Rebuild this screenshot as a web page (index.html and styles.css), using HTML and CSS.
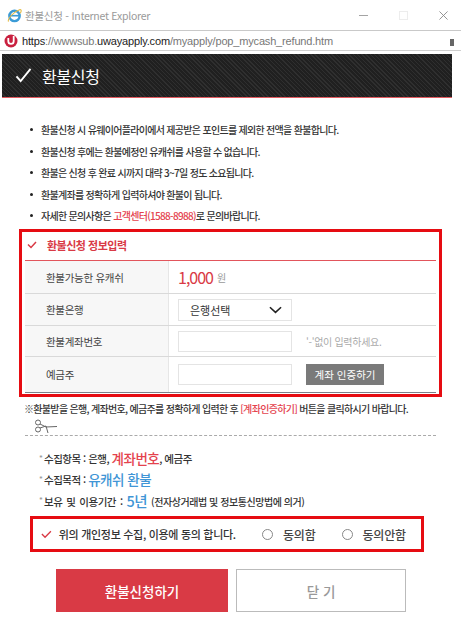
FILE: index.html
```html
<!DOCTYPE html>
<html lang="ko">
<head>
<meta charset="utf-8">
<title>환불신청</title>
<link rel="stylesheet" href="styles.css">
</head>
<body>
<div class="page">
  <div class="titlebar">
    <svg class="ie" viewBox="0 0 16 16" width="15" height="15"><circle cx="8" cy="8.500" r="5.500" fill="none" stroke="#3b9bd6" stroke-width="2.600"/><path d="M3 8.200h10.500" stroke="#3b9bd6" stroke-width="1.800"/><path d="M1.500 14.500C.5 12 6 4 14 1.500c1.500 0 1.500 2 .3 4" fill="none" stroke="#e3b93c" stroke-width="1.100"/></svg>
    <span class="wintitle">환불신청 - Internet Explorer</span>
    <div class="winctl">
      <svg viewBox="0 0 10 10" width="9" height="9"><path d="M0 5h10" stroke="#9a9a9a"/></svg>
      <svg viewBox="0 0 10 10" width="9" height="9"><rect x=".5" y=".5" width="9" height="9" fill="none" stroke="#ececec"/></svg>
      <svg viewBox="0 0 10 10" width="9" height="9"><path d="M.5.500l9 9M9.500.500l-9 9" stroke="#8a8a8a"/></svg>
    </div>
  </div>
  <div class="addrbar">
    <svg viewBox="0 0 14 14" width="14" height="14"><circle cx="7" cy="7" r="6.500" fill="#c9203f"/><path d="M4.300 4v3.200a2.700 2.700 0 0 0 5.400 0V2" fill="none" stroke="#fff" stroke-width="1.800"/></svg>
    <span class="url"><b>https</b>://wwwsub.<b>uwayapply.com</b>/myapply/pop_mycash_refund.htm</span>
    <svg class="lock" viewBox="0 0 4 10" width="4" height="10"><rect y="3" width="4" height="7" fill="#666"/></svg>
  </div>
  <header class="banner">
    <svg viewBox="0 0 18 16" width="17" height="15"><path d="M1.500 9l4.500 5L16.500 1" fill="none" stroke="#fff" stroke-width="2"/></svg>
    <h1>환불신청</h1>
  </header>

  <ul class="notes">
    <li>환불신청 시 유웨이어플라이에서 제공받은 포인트를 제외한 전액을 환불합니다.</li>
    <li>환불신청 후에는 환불예정인 유캐쉬를 사용할 수 없습니다.</li>
    <li>환불은 신청 후 완료 시까지 대략 3~7일 정도 소요됩니다.</li>
    <li>환불계좌를 정확하게 입력하셔야 환불이 됩니다.</li>
    <li>자세한 문의사항은 <em>고객센터(1588-8988)</em>로 문의바랍니다.</li>
  </ul>

  <section class="formbox">
    <h2><svg viewBox="0 0 10 8" width="10" height="8"><path d="M1 3.500l3 3L9 1" fill="none" stroke="#d93a45" stroke-width="1.500"/></svg>환불신청 정보입력</h2>
    <div class="row r1">
      <div class="th">환불가능한 유캐쉬</div>
      <div class="td"><span class="amount">1,000</span><span class="won">원</span></div>
    </div>
    <div class="row r2">
      <div class="th">환불은행</div>
      <div class="td"><div class="select"><span>은행선택</span><svg viewBox="0 0 14 8" width="13" height="8"><path d="M1 1l6 5.500L13 1" fill="none" stroke="#222" stroke-width="1.700"/></svg></div></div>
    </div>
    <div class="row r3">
      <div class="th">환불계좌번호</div>
      <div class="td"><div class="input"></div><span class="hint">'-'없이 입력하세요.</span></div>
    </div>
    <div class="row r4">
      <div class="th">예금주</div>
      <div class="td"><div class="input"></div><span class="verify">계좌 인증하기</span></div>
    </div>
  </section>

  <p class="warn">※환불받을 은행, 계좌번호, 예금주를 정확하게 입력한 후 <em>[계좌인증하기]</em> 버튼을 클릭하시기 바랍니다.</p>

  <div class="cut">
    <svg viewBox="0 0 24 15" width="24" height="15"><circle cx="4" cy="3.500" r="2.500" fill="none" stroke="#666"/><circle cx="4" cy="10.500" r="2.500" fill="none" stroke="#666"/><path d="M6 5l6 3 11-.500M6 9l6-2 2 7" fill="none" stroke="#666"/></svg>
  </div>

  <ul class="collect">
    <li>수집항목 : 은행, <strong class="red">계좌번호</strong>, 예금주</li>
    <li>수집목적 : <strong class="blue">유캐쉬 환불</strong></li>
    <li class="retain">보유 및 이용기간 : <strong class="blue">5년</strong> <small>(전자상거래법 및 정보통신망법에 의거)</small></li>
  </ul>

  <div class="agree">
    <svg viewBox="0 0 12 9" width="11" height="9"><path d="M1 4l3.500 3.500L11 1" fill="none" stroke="#d93a45" stroke-width="1.500"/></svg>
    <span class="agreetext">위의 개인정보 수집, 이용에 동의 합니다.</span>
    <span class="radio"><i></i>동의함</span>
    <span class="radio"><i></i>동의안함</span>
  </div>

  <div class="actions">
    <button class="btn primary">환불신청하기</button>
    <button class="btn ghost">닫 기</button>
  </div>
</div>
</body>
</html>
```

FILE: styles.css
```css
* { box-sizing: border-box; }
html, body { margin: 0; padding: 0; background: #fff; }
body { font-family: "Noto Sans CJK KR", "Noto Sans", sans-serif; color: #333; }
ul, h1, h2, p { margin: 0; padding: 0; }
li { list-style: none; }
em { font-style: normal; color: #e4424d; }
.page { width: 461px; height: 630px; overflow: hidden; }

.titlebar { height: 31px; display: flex; align-items: center; padding: 0 13px 0 7px; border-bottom: 1px solid #c9c9c9; }
.wintitle { margin-left: 3px; font-size: 10.500px; color: #9a9a9a; letter-spacing: -.25px; }
.winctl { margin-left: auto; display: flex; gap: 31px; }

.addrbar { height: 20px; display: flex; align-items: center; padding: 0 2px 0 4px; border-bottom: 1px solid #cfcfcf; gap: 4px; }
.url { font-family: "Liberation Sans", sans-serif; font-size: 11px; color: #777; white-space: nowrap; letter-spacing: -.17px; }
.url b { font-weight: normal; color: #222; }
.lock { margin-left: auto; margin-right: 5px; }

.banner { margin: 3px 9px 0 2px; height: 44px; display: flex; align-items: center; padding-left: 13px; gap: 10px; border-bottom: 1px solid #e25a5f; background: repeating-linear-gradient(45deg, #202020 0 2px, #2f2f2f 2px 3px); }
.banner h1 { font-size: 16px; font-weight: 400; color: #fff; letter-spacing: -.3px; }

.notes { margin-top: 21px; padding-left: 29px; }
.notes li { position: relative; height: 21.500px; line-height: 21.500px; padding-left: 12px; font-size: 10px; font-weight: 500; letter-spacing: -.7px; color: #333; white-space: nowrap; }
.notes li::before { content: ""; position: absolute; left: 1px; top: 9px; width: 3px; height: 3px; border-radius: 50%; background: #222; }

.formbox { margin: 2.500px 0 0 19px; width: 423px; height: 168px; border: 3px solid #e60c12; padding: 0 3px; }
.formbox h2 { height: 29px; display: flex; align-items: center; gap: 10px; padding: 0 0 2px 2px; font-size: 11px; font-weight: 700; color: #d93a45; border-bottom: 1px solid #e2555c; letter-spacing: -.5px; }
.row { display: flex; border-bottom: 1px solid #d9d9d9; font-size: 10.500px; }
.r1 { height: 33px; }
.r2 { height: 32px; }
.r3 { height: 31px; }
.r4 { height: 36px; border-bottom-color: #7b8089; }
.th { width: 144px; padding-left: 21px; background: #f7f7f7; border-right: 1px solid #e6e6e6; display: flex; align-items: center; color: #444; letter-spacing: -.3px; }
.td { flex: 1; display: flex; align-items: center; padding-left: 9px; }
.amount { font-size: 16px; color: #d93a45; letter-spacing: -1px; }
.won { margin-left: 4px; font-size: 10px; color: #999; }
.select { width: 114px; height: 22px; border: 1px solid #e4e4e4; display: flex; align-items: center; justify-content: space-between; padding: 0 9px 0 11px; font-size: 11px; color: #333; }
.input { width: 114px; height: 21px; border: 1px solid #e4e4e4; background: #fff; }
.hint { margin-left: 14px; font-size: 10px; color: #aaa; letter-spacing: -.3px; }
.verify { margin-left: 14px; width: 78px; height: 21px; background: #7a7a7a; color: #fff; font-size: 10.500px; display: flex; align-items: center; justify-content: center; }

.warn { margin: 4px 0 0 24px; font-size: 10px; font-weight: 500; line-height: 15px; letter-spacing: -.68px; white-space: nowrap; color: #333; }

.cut { margin: 3px 0 0 25px; width: 411px; height: 17px; padding-left: 9px; border-bottom: 1px dashed #aaa; line-height: 0; }

.collect { margin-top: 12px; padding-left: 39px; }
.collect li { height: 21px; display: block; line-height: 21px; font-size: 10.500px; font-weight: 500; letter-spacing: -.5px; white-space: nowrap; color: #333; position: relative; padding-left: 5px; }
.collect li::before { content: "*"; position: absolute; left: 0; top: -1px; font-size: 8px; color: #999; }
.collect strong { font-weight: 500; font-size: 13.500px; vertical-align: -1px; }
.collect .retain { word-spacing: 1.500px; }
.retain strong { font-size: 14.500px; }
.retain small { word-spacing: 0; }
.red { color: #e4424d; }
.blue { color: #3f95d6; }
.collect small { font-size: 10px; letter-spacing: -.45px; }

.agree { margin: 5px 0 0 30px; width: 394px; height: 36px; border: 3px solid #e60c12; display: flex; align-items: center; padding-left: 8px; font-size: 11px; font-weight: 500; color: #333; }
.agreetext { margin-left: 7px; letter-spacing: -.3px; white-space: nowrap; width: 207px; }
.radio { display: flex; align-items: center; gap: 10px; font-size: 12px; letter-spacing: -.2px; white-space: nowrap; color: #444; width: 81px; }
.radio i { width: 11px; height: 11px; border: 1px solid #888; border-radius: 50%; background: #fff; flex: none; }

.actions { display: flex; gap: 8px; margin: 17px 0 0 56px; }
.btn { height: 43px; font-family: inherit; font-size: 13.500px; font-weight: 500; border-radius: 0; padding: 0; }
.primary { width: 172px; background: #d93a45; color: #fff; border: 0; }
.ghost { width: 170px; background: #fff; color: #999; border: 1px solid #bbb; }
```
